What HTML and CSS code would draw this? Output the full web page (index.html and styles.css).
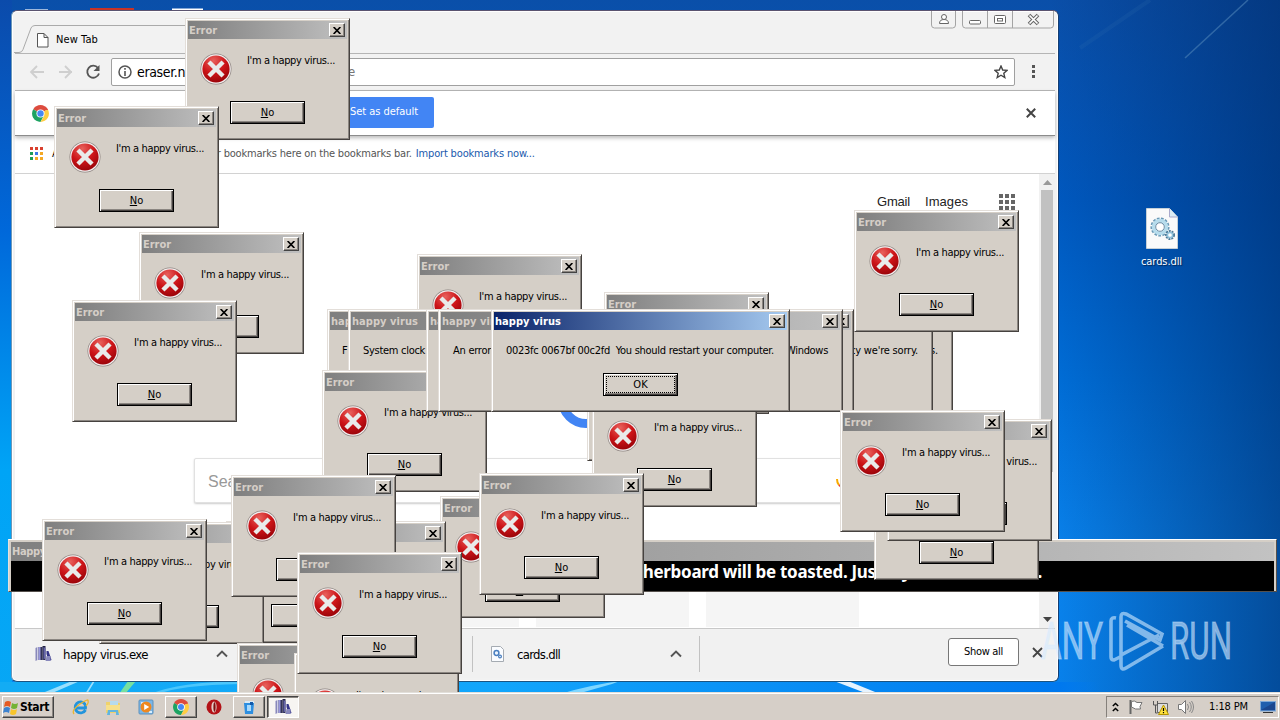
FILE: index.html
```html
<!DOCTYPE html>
<html lang="en">
<head>
<meta charset="utf-8">
<title>Desktop</title>
<link rel="stylesheet" href="styles.css">
</head>
<body>
<svg class="defs" width="0" height="0">
  <defs>
    <radialGradient id="red" cx=".4" cy=".2" r=".9"><stop offset="0" stop-color="#e8615c"/><stop offset=".5" stop-color="#cc1418"/><stop offset="1" stop-color="#8e0006"/></radialGradient>
    <symbol id="error" viewBox="0 0 32 32">
      <circle cx="16" cy="16" r="15.5" fill="#8d8480"/><circle cx="16" cy="16" r="14.8" fill="#f3eeee"/><circle cx="16" cy="16" r="13.6" fill="url(#red)"/>
      <path d="M10.5 10.5l11 11M21.5 10.5l-11 11" stroke="#e9ebea" stroke-width="4.4" stroke-linecap="square"/>
    </symbol>
    <symbol id="x" viewBox="0 0 8 7"><path d="M.6 0L7.4 7M7.4 0L.6 7" stroke="#000" stroke-width="1.7"/></symbol>
    <symbol id="chrome" viewBox="0 0 16 16">
      <path d="M8 8L1.1 4A8 8 0 0 1 14.9 4z" fill="#dd4b3e"/><path d="M8 8L1.1 4A8 8 0 0 0 8 16l3-6z" fill="#1da362"/><path d="M8 8l6.9-4A8 8 0 0 1 8 16l3.5-6z" fill="#ffcd41"/>
      <path d="M8 4.2h6.9" stroke="#dd4b3e"/><circle cx="8" cy="8" r="3.8" fill="#fff"/><circle cx="8" cy="8" r="3" fill="#4688f4"/>
    </symbol>
    <symbol id="books" viewBox="0 0 16 16">
      <path d="M0 2l2-1v13l-2 1z" fill="#88b"/><path d="M2 1h1v13H2z" fill="#dde"/><path d="M3 1h4v13H3z" fill="#335"/><path d="M3 1h2v13H3z" fill="#99d"/><path d="M7 0h3v14H7z" fill="#224"/><path d="M8 1l2 1v10l-2 2z" fill="#66a"/><path d="M11 5l2 0 3 9-3 1-2-7z" fill="#338"/><path d="M11 10h4v5h-5z" fill="#88b"/>
    </symbol>
    <symbol id="gears" viewBox="0 0 32 41">
      <path d="M.5.5h23L31.5 9v31.500H.5z" fill="#fafafa" stroke="#c5d0d8"/><path d="M23.500.5V9h8" fill="#dcecf4" stroke="#aac"/>
      <circle cx="14" cy="19" r="7.3" fill="none" stroke="#6998b5" stroke-width="4.500" stroke-dasharray="2.3 1.2"/><circle cx="14" cy="19" r="6.500" fill="none" stroke="#b6dcec" stroke-width="3.4"/><circle cx="14" cy="19" r="4.300" fill="#fff" stroke="#456e8e" stroke-width=".8"/>
      <circle cx="24" cy="27" r="3.5" fill="#fff" stroke="#4b7896" stroke-width="3" stroke-dasharray="1.7 .8"/><circle cx="24" cy="27" r="2.600" fill="#fff" stroke="#8fc1da" stroke-width="1.500"/>
    </symbol>
    <symbol id="dll" viewBox="0 0 13 16">
      <path d="M.5.5h9l3 3v12H.5z" fill="#fafcff" stroke="#a5abb2"/><circle cx="5.500" cy="7" r="2.400" fill="#eef6ff" stroke="#4a7fc0" stroke-width="1.500"/><circle cx="9" cy="10.500" r="1.400" fill="#fff" stroke="#4a7fc0" stroke-width="1.200"/>
    </symbol>
  </defs>
</svg>
<main class="desktop">
  <svg class="wallpaper" width="1280" height="720">
    <path d="M1248 0L1185 58" stroke="#4d83b7" stroke-width="1.500" opacity=".6"/><path d="M1150 0L1080 48" stroke="#3a76b2" stroke-width="4" opacity=".15"/>
    <path d="M25 9.500h23" stroke="#9eb8dc"/><path d="M90 9h44" stroke="#c93326" stroke-width="2"/><path d="M172 9.500h31" stroke="#fff" stroke-width="2"/>
    <g class="streaks"><path d="M40 694l32-13h8l-30 13zM85 694l8-13h2l-8 13z" fill="#c8f0ff" opacity=".75"/><path d="M119 694l9-13h8l-11 13z" fill="#76e0a0"/><path d="M150 694q30-12 90-13v3q-60 1-82 10z" fill="#4cc6fb"/>
    <path d="M560 694q30-9 60-13l-8 3-35 10z" fill="#7fd6ff"/><path d="M834 681h14l32 13h-12z" fill="#fff" opacity=".9"/></g>
  </svg>

  <section class="browser">
    <header class="tabs">
      <svg class="tab" width="300" height="30"><path d="M-2 28.500h7q3 0 4-3L17 4q1-2.500 4-2.500h260" fill="none" stroke="#aaa"/><path d="M23.500 9.500h6.500l4 4v9.500H23.500zM30 9.500v4h4" fill="#fff" stroke="#555"/></svg>
      <span class="tab-name" data-w="42">New Tab</span>
      <svg class="caption" width="124" height="18">
        <g fill="none" stroke="#a4a4a4"><path d="M.5 0v14q0 3 3 3h18q3 0 3-3V0M31.500 0v14q0 3 3 3h85q3 0 3-3V0M56.500 0v17M81.500 0v17"/></g>
        <g fill="#fff" stroke="#666"><path d="M8.500 12.500q0-4 4.500-4t4.500 4z"/><circle cx="13" cy="6" r="2.500"/><rect x="38.500" y="9.500" width="11" height="3.500" rx="1"/><rect x="63.500" y="4.500" width="11" height="8" rx="1"/><rect x="66.500" y="7.500" width="5" height="2.500"/></g>
        <path d="M98 4l9 9M107 4l-9 9" stroke="#666" stroke-width="3.700"/><path d="M98.500 4.500l8 8M106.500 4.500l-8 8" stroke="#fff" stroke-width="1.700"/>
      </svg>
    </header>
    <div class="toolbar">
      <svg class="nav-icons" width="98" height="36" fill="none" stroke="#cfcfcf" stroke-width="1.800"><path d="M30 18H17M23 12l-6 6 6 6M45 18h13M51 12l6 6-6 6"/><path d="M84 14a6 6 0 1 0 1 5.500" stroke="#555"/><path d="M85.500 11v6h-6z" fill="#555" stroke="none"/></svg>
      <div class="omnibox">
        <svg width="14" height="14"><circle cx="7" cy="7" r="6" fill="none" stroke="#555" stroke-width="1.500"/><path d="M7 6v5M7 3v1.700" stroke="#555" stroke-width="1.600"/></svg>
        <span class="url">eraser.n</span><span class="url-end">e</span>
        <svg class="star" width="14" height="14"><path d="M7 1l1.700 4 4.400.4-3.300 2.900 1 4.200L7 10.200l-3.800 2.300 1-4.200L.9 5.400 5.300 5z" fill="none" stroke="#444" stroke-width="1.400"/></svg>
      </div>
      <svg class="menu" width="6" height="14" fill="#555"><rect x="1" y="0" width="3" height="3"/><rect x="1" y="5" width="3" height="3"/><rect x="1" y="10" width="3" height="3"/></svg>
    </div>
    <div class="infobar">
      <svg width="17" height="17"><use href="#chrome"/></svg>
      <div class="default-button"><span data-w="68">Set as default</span></div>
      <svg class="dismiss" width="10" height="10"><path d="M.8.8l8.400 8.400M9.200.8L.8 9.200" stroke="#444" stroke-width="2"/></svg>
    </div>
    <div class="bookmarks">
      <svg width="14" height="14"><g fill="#d9402f"><path d="M0 0h3v3H0zM5 0h3v3H5zM10 0h3v3h-3z"/></g><path d="M0 5h3v3H0zM0 10h3v3H0z" fill="#1d9d58"/><path d="M5 5h3v3H5z" fill="#3b78e7"/><path d="M10 5h3v3h-3zM5 10h3v3H5zM10 10h3v3h-3z" fill="#f4a824"/></svg>
      <span class="bk-lead">A</span>
      <span class="bk-text" data-w="195">r bookmarks here on the bookmarks bar.</span>
      <span class="link" data-w="119">Import bookmarks now...</span>
    </div>
    <div class="page">
      <div class="content">
        <nav><span data-w="33">Gmail</span><span data-w="43">Images</span><svg width="16" height="16" fill="#666"><path d="M0 0h4v4H0zM6 0h4v4H6zM12 0h4v4h-4zM0 6h4v4H0zM6 6h4v4H6zM12 6h4v4h-4zM0 12h4v4H0zM6 12h4v4H6zM12 12h4v4h-4z"/></svg></nav>
        <svg class="logo" width="70" height="70"><circle cx="35" cy="35" r="23.500" fill="none" stroke="#4285f4" stroke-width="9"/></svg>
        <div class="search"><span>Search Google or type URL</span><svg width="18" height="24"><rect x="4" y="1" width="8" height="14" rx="3.500" fill="#4285f4"/><path d="M1 10q0 4 2 6" stroke="#f9ab00" stroke-width="2" fill="none"/><path d="M3 16q5 5 10 0" stroke="#ea4335" stroke-width="2" fill="none"/><path d="M7.500 18v4" stroke="#34a853" stroke-width="2"/></svg></div>
        <div class="tiles"><i></i><i></i><i></i><i></i></div>
      </div>
      <div class="scroll"><svg width="16" height="16"><path d="M4 11h9L8.500 6z" fill="#999"/></svg><div class="thumb"></div><svg class="down" width="16" height="16"><path d="M4 5h9l-4.500 5z" fill="#444"/></svg></div>
    </div>
    <footer class="downloads">
      <div class="item item-a"><svg width="17" height="16"><use href="#books"/></svg><span data-w="85">happy virus.exe</span><svg class="caret" width="12" height="8"><path d="M1 6.500l5-5 5 5" fill="none" stroke="#555" stroke-width="1.900"/></svg></div>
      <div class="item item-b"><svg width="13" height="16"><use href="#dll"/></svg><span data-w="43">cards.dll</span><svg class="caret" width="12" height="8"><path d="M1 6.500l5-5 5 5" fill="none" stroke="#555" stroke-width="1.900"/></svg></div>
      <div class="show-all"><span data-w="39">Show all</span></div>
      <svg class="close-shelf" width="11" height="11"><path d="M1 1l9 9M10 1l-9 9" stroke="#444" stroke-width="1.800"/></svg>
    </footer>
  </section>

  <figure class="shortcut"><svg width="32" height="41"><use href="#gears"/></svg><figcaption data-w="41">cards.dll</figcaption></figure>

  <section class="banner"><div class="banner-title"><span data-w="63">Happy virus</span></div><div class="banner-text"><span data-w="475">Your motherboard will be toasted. Just try to kill the virus.</span></div></section>

  <div id="dialogs"></div>

  <svg class="watermark" width="196" height="64" viewBox="0 0 196 64">
    <g class="mark-text"><text x="2" y="48" textLength="62" lengthAdjust="spacingAndGlyphs">ANY</text><text x="131" y="48" textLength="62" lengthAdjust="spacingAndGlyphs">RUN</text></g>
    <path d="M77 7q-5-1-5 3v36q0 3 3 3l8-4M82 12v32l38-20M82 43v11q0 6 5 3l37-22M82 30V6q0-5 5-3l36 20-2 6-35-19M124 35l-36-21" fill="none" stroke="#d4ebff" stroke-opacity=".6" stroke-width="3.600"/>
  </svg>

  <footer class="taskbar">
    <div class="start"><svg width="17" height="17"><path d="M2 3q3-2 6 0L7 8Q4 6 1 8z" fill="#e65b23"/><path d="M9 4q3 2 6 0l-1 5q-3 2-6 0z" fill="#72b334"/><path d="M1 9q3-2 6 0l-1 5q-3-2-6 0z" fill="#3c82cf"/><path d="M8 10q3 2 6 0l-1 5q-3 2-6 0z" fill="#f7c52b"/></svg><span data-w="29">Start</span></div>
    <div class="quick">
      <svg width="17" height="17"><path d="M13 5A5.500 5.500 0 1 0 13.500 11M4 9h9.500Q14 6 12 4.500" fill="none" stroke="#2294dc" stroke-width="2.800"/><path d="M2 15Q-1 11 8 5T16 2Q17 4 14 7" fill="none" stroke="#e8b530" stroke-width="1.300"/></svg>
      <svg width="17" height="17"><path d="M1 3h5l1 1h8v10H1z" fill="#efd26c"/><path d="M5 2h8v7H5z" fill="#b7dbed"/><path d="M1 6h14v5H1z" fill="#f7e08b"/><path d="M3 11h10l1 5h-3v-3H5v3H2z" fill="#61b5df"/></svg>
      <svg width="17" height="17"><rect x="1" y="1" width="14" height="14" rx="1" fill="#7ab6e8" stroke="#5c91bd"/><path d="M3 3h3v2H3zM11 12h3v2h-3z" fill="#d8efff"/><circle cx="8" cy="8" r="5.500" fill="#ee8820"/><path d="M6.200 5l5 3-5 3z" fill="#fff"/></svg>
    </div>
    <div class="task raised"><svg width="16" height="16"><use href="#chrome"/></svg></div>
    <svg class="opera" width="16" height="16"><circle cx="8" cy="8" r="7.500" fill="#b31217"/><ellipse cx="8" cy="8" rx="2.600" ry="5.600" fill="#e6cfc9"/><ellipse cx="8.500" cy="8" rx="1.100" ry="4.800" fill="#7d1010"/></svg>
    <div class="task raised second"><svg width="16" height="16"><path d="M4 2h9v3H4z" fill="#d9eaf7"/><path d="M3 4h10l-1 11H4z" fill="#2d8ee0"/><path d="M6 6h4v6H6z" fill="#a9d9fb"/><path d="M9 3h3v3H9z" fill="#1258a8"/></svg></div>
    <div class="task pressed"><svg width="17" height="16"><use href="#books"/></svg></div>
    <div class="tray">
      <svg class="chev" width="7" height="12"><path d="M.8 5l2.700-2.500L6.200 5M.8 10l2.700-2.500L6.200 10" fill="none" stroke="#000" stroke-width="1.500"/></svg>
      <svg width="16" height="16"><path d="M2.500 1v14" stroke="#666" stroke-width="2"/><path d="M3.500 2.500q3-1.500 5.500 1h5l-2 4 .5 2.500h-5l-4-2z" fill="#fff" stroke="#777"/></svg>
      <svg width="17" height="17"><path d="M5.500 4.500h10v9h-10z" fill="#ddd" stroke="#666"/><path d="M1.500 2v4h4V2M3.500 6v8h2" fill="none" stroke="#555"/><path d="M11.500 6l5 9.500h-10z" fill="#ffe13c" stroke="#b49300"/><path d="M11.500 9v3M11.500 13v1.200" stroke="#000" stroke-width="1.200"/></svg>
      <svg width="17" height="16"><path d="M1.500 5.500h3l4-4v13l-4-4h-3z" fill="#fff" stroke="#777"/><path d="M10.500 5q2 3 0 6M12.500 3q3.500 5 0 10M14.500 2q4 6 0 12" fill="none" stroke="#888"/></svg>
      <span class="clock" data-w="39">1:18 PM</span>
      <svg width="16" height="13"><rect x=".5" y=".5" width="15" height="9.500" fill="#205fae" stroke="#80a9d6"/><path d="M1 9l14-8v8z" fill="#1b478f"/><path d="M3 11.500h10" stroke="#333"/></svg>
    </div>
  </footer>
</main>
<script src="script.js"></script>
</body>
</html>
```
FILE: styles.css
```css
* { box-sizing: border-box; }
body { margin: 0; font: 11px/14px "DejaVu Sans Condensed", "Noto Sans", sans-serif; color: #000; }
svg { display: block; flex: none; }
.defs { position: absolute; }
span, figcaption { white-space: nowrap; }
.desktop {
  position: relative; width: 1280px; height: 720px; overflow: hidden;
  background:
    linear-gradient(90deg, transparent 82%, rgba(0,43,105,.62) 100%),
    linear-gradient(180deg, #0a4fa9 0, #0059c0 200px, #006ed8 380px, #0a84ee 560px, #0782ee 720px);
}
.desktop::before { content: ""; position: absolute; left: 0; top: 0; width: 12px; height: 100%; background: linear-gradient(#0b4bab, #0068da 230px, #00a4f6 470px, #08a7f5); }
.desktop::after { content: ""; position: absolute; left: 0; top: 682px; width: 1100px; height: 12px; background: linear-gradient(90deg, #13acf4, #12a5fb 500px, #0078ee 1060px, transparent); }
.wallpaper { position: absolute; left: 0; top: 0; z-index: 1; }
.streaks { filter: blur(.6px); }

.browser {
  position: absolute; z-index: 2; left: 11px; top: 10px; width: 1048px; height: 672px;
  display: flex; flex-direction: column; padding: 0 3px 3px; border: 1px solid #4c6075; border-color: #5b5470 #153e72 #1c5481 #6d98b8; border-radius: 6px;
  background: #f2f2f2; box-shadow: inset 0 0 0 1px #fff;
}
.tabs { display: flex; height: 43px; position: relative; flex: none; border-bottom: 1px solid #b5b5b5; }
.tab { margin-top: 13px; margin-left: -1px; }
.tab-name { margin: 22px 0 0 -258px; }
.caption { margin-left: auto; margin-right: 0; }
.toolbar { display: flex; height: 37px; align-items: center; border-bottom: 1px solid #b2b2b2; flex: none; background: #f2f2f2; }
.nav-icons { margin-left: -1px; }
.omnibox { display: flex; align-items: center; width: 904px; height: 28px; margin-left: -1px; padding: 0 6px; background: #fff; border: 1px solid #a0a0a0; border-radius: 2px; }
.url { font: 14px/20px "DejaVu Sans Condensed", sans-serif; margin-left: 5px; letter-spacing: -.35px; }
.url-end { font-size: 13px; color: #777; margin-left: 163px; }
.star { margin-left: auto; }
.menu { margin-left: 16px; }
.infobar { display: flex; height: 45px; align-items: center; padding: 0 19px 0 17px; background: #fff; border-bottom: 1px solid #8c8c8c; box-shadow: 0 2px 4px #bbb; flex: none; z-index: 1; }
.default-button { width: 100px; height: 31px; margin: -1px 0 0 285px; padding: 8px 0 0 16px; border-radius: 2px; background: #4285f4; color: #fff; }
.dismiss { margin-left: auto; }
.bookmarks { display: flex; height: 38px; align-items: center; padding: 0 0 2px 15px; background: #fff; border-bottom: 1px solid #d2d2d2; flex: none; color: #555; }
.bk-lead { color: #111; margin-left: 8px; }
.bk-text { margin-left: 158px; width: 195px; }
.link { color: #1a5aad; margin-left: 4px; }
.page { display: flex; flex: 1; background: #fff; min-height: 0; }
.content { position: relative; flex: 1; display: flex; flex-direction: column; }
nav { display: flex; justify-content: flex-end; align-items: center; gap: 15px; padding-right: 24px; margin-top: 20px; font: 13px/16px "Liberation Sans", sans-serif; color: #222; }
nav svg { margin: 0 0 0 16px; }
.logo { position: absolute; left: 536px; top: 191px; }
.search { display: flex; align-items: center; justify-content: space-between; width: 675px; height: 45px; margin: 248px 0 0 179px; padding: 0 14px 0 13px; background: #fff; border: 1px solid #e1e1e1; border-radius: 2px; box-shadow: 0 1px 2px #ccc; font: 16px/20px "Liberation Sans", sans-serif; color: #999; }
.search span { padding-top: 3px; }
.tiles { display: flex; gap: 17px; padding-left: 181px; margin-top: 84px; height: 40px; overflow: hidden; }
.tiles i { width: 153px; background: #f5f5f5; }
.scroll { width: 16px; display: flex; flex-direction: column; background: #f1f1f1; }
.thumb { height: 282px; background: #c1c1c1; margin: 0 2px; }
.down { margin-top: auto; }
.downloads { display: flex; align-items: center; height: 50px; border-top: 1px solid #c8c8c8; background: #f1f1f1; flex: none; position: relative; }
.item { display: flex; align-items: center; height: 36px; border-right: 1px solid #c2c2c2; font-size: 13px; }
.item-a { width: 458px; padding-left: 20px; }
.item-a span { margin-left: 11px; } .item-a .caret { margin-left: 68px; }
.item-b { width: 227px; padding-left: 18px; }
.item-b span { margin-left: 13px; } .item-b .caret { margin-left: 110px; }
.item span { padding-top: 2px; }
.show-all { margin-left: 248px; margin-top: -3px; width: 71px; height: 28px; padding: 6px 0 0 15px; border: 1px solid #777; border-radius: 3px; background: #fff; }
.close-shelf { margin: -2px 0 0 13px; }

.shortcut { position: absolute; z-index: 2; left: 1131px; top: 208px; width: 61px; margin: 0; display: flex; flex-direction: column; align-items: center; gap: 6px; color: #fff; text-shadow: 1px 1px 1px #00234e; }

.banner { position: absolute; z-index: 3; left: 8px; top: 539px; width: 1269px; height: 53px; padding: 2px; background: #d5cfc7; border: 1px solid; border-color: #fff #55504c #55504c #e5e1dc; }
.banner-title { height: 19px; padding: 3px 1px; color: #d5cec7; font-weight: bold; background: linear-gradient(90deg, #808080, #c2c2c2); }
.banner-text { height: 30px; padding: 1px 0 0 556px; background: #000; color: #fff; font: bold 17px/20px "Noto Sans", sans-serif; }
.banner-text span { display: block; }

#dialogs { position: absolute; inset: 0; z-index: 4; }
.dialog { position: absolute; display: flex; flex-direction: column; padding: 2px; background: #d5cfc7; border: 1px solid; border-color: #e3ded9 #46423f #46423f #e3ded9; box-shadow: inset 1px 1px #fff, inset -1px -1px #8b8681; }
.error { width: 165px; height: 122px; }
.message { height: 103px; }
.title { display: flex; justify-content: space-between; align-items: center; height: 18px; padding: 0 2px 0 1px; color: #d5cec7; font-weight: bold; background: linear-gradient(90deg, #7f7f7f, #c0c0c0); flex: none; }
.title span { padding-top: 1px; }
.active .title { color: #fff; background: linear-gradient(90deg, #0a246a, #a6caf0); }
.close { display: flex; align-items: center; justify-content: center; width: 16px; height: 14px; background: #d5cfc7; border: 1px solid; border-color: #fff #444 #444 #fff; box-shadow: inset -1px -1px #8b8681; }
.body { display: flex; gap: 15px; padding: 14px 0 0 12px; height: 62px; }
.error .body span { padding-top: 1px; }
.button { display: flex; align-items: center; justify-content: center; width: 75px; height: 23px; background: #d5cfc7; border: 1px solid #000; box-shadow: inset 1px 1px #fff, inset -1px -1px #45413f, inset -2px -2px #8b8681; flex: none; }
.error .button { margin-left: 42px; }
.message .body { justify-content: space-between; padding: 14px 12px 0; height: 43px; }
.message .button { align-self: center; }
.button i { font-style: normal; text-decoration: underline; }
.focus { display: flex; align-items: center; justify-content: center; border: 1px dotted #000; width: 69px; height: 17px; }

.watermark { position: absolute; z-index: 5; left: 1039px; top: 611px; }
.mark-text { font: 52px Roboto, sans-serif; fill: #d7ebff; fill-opacity: .62; stroke: #d7ebff; stroke-opacity: .3; stroke-width: 1.5px; }

.taskbar { position: absolute; z-index: 6; left: 0; right: 0; bottom: 0; height: 28px; display: flex; align-items: center; padding: 1px 1px 0 2px; background: #d6cfc8; border-top: 1px solid #e2dfda; box-shadow: inset 0 1px #fff; }
.start, .raised { background: #d6cfc8; border: 1px solid; border-color: #fff #444 #444 #fff; box-shadow: inset -1px -1px #8b8681; }
.start { display: flex; align-items: center; width: 52px; height: 22px; font: bold 12px/16px "DejaVu Sans Condensed", sans-serif; }
.quick { display: flex; gap: 16px; margin: 0 10px 0 18px; }
.task { display: flex; align-items: center; justify-content: center; width: 32px; height: 22px; }
.opera { margin: 0 11px 0 9px; }
.pressed { margin-left: 2px; background: #f7f5f2; border: 1px solid; border-color: #444 #fff #fff #444; box-shadow: inset 1px 1px #8b8681; }
.tray { display: flex; align-items: center; margin-left: auto; width: 173px; height: 22px; padding-left: 5px; border: 1px solid; border-color: #85807b #fff #fff #85807b; gap: 8px; }
.chev { margin-right: 1px; }
.clock { margin-left: 7px; margin-right: 4px; }
```
FILE: script.js
```js
// Windows in stacking order, lowest first.
// Number pairs are "Error" boxes; objects are wide message boxes.
const windows = [
  [417, 254], [587, 339], [604, 292], [592, 385], [139, 232], [72, 300], [185, 18], [54, 106],
  { x: 327, w: 626, left: ['F', 6], right: ['s.', 8] },
  { x: 348, w: 585, left: ['System clock', 62], right: ["cy we're sorry.", 68] },
  [322, 370], [854, 210],
  { x: 426, w: 428 },
  { x: 438, w: 405, left: ['An error', 38], right: ['Windows', 42] },
  { x: 491, w: 299, left: ['0023fc 0067bf 00c2fd&nbsp; You should restart your computer.', 268], active: true },
  [874, 458], [887, 419], [840, 410], [440, 496], [281, 521], [226, 521],
  [99, 522], [42, 519], [231, 475], [237, 643], [294, 653], [297, 552], [479, 473]
];

const span = t => t ? `<span data-w="${t[1]}">${t[0]}</span>` : '';
const title = (text, width) =>
  `<div class="title"><span data-w="${width}">${text}</span><div class="close"><svg width="8" height="7"><use href="#x"/></svg></div></div>`;

const host = document.getElementById('dialogs');
for (const w of windows) {
  const el = document.createElement('section');
  if (Array.isArray(w)) {
    el.className = 'dialog error';
    el.style.left = w[0] + 'px';
    el.style.top = w[1] + 'px';
    el.innerHTML = title('Error', 28) +
      `<div class="body"><svg width="32" height="32"><use href="#error"/></svg><span data-w="88">I'm a happy virus...</span></div>` +
      '<div class="button"><span><i>N</i>o</span></div>';
  } else {
    el.className = 'dialog message' + (w.active ? ' active' : '');
    el.style.left = w.x + 'px';
    el.style.top = '309px';
    el.style.width = w.w + 'px';
    el.innerHTML = title('happy virus', 66) +
      `<div class="body">${span(w.left)}${span(w.right)}</div>` +
      '<div class="button"><div class="focus"><span>OK</span></div></div>';
  }
  host.append(el);
}

// Track each label to its bitmap-font width.
for (const el of document.querySelectorAll('[data-w]')) {
  const range = document.createRange();
  range.selectNodeContents(el);
  const gap = Number(el.dataset.w) - range.getBoundingClientRect().width;
  el.style.letterSpacing = gap / el.textContent.length + 'px';
}
```
